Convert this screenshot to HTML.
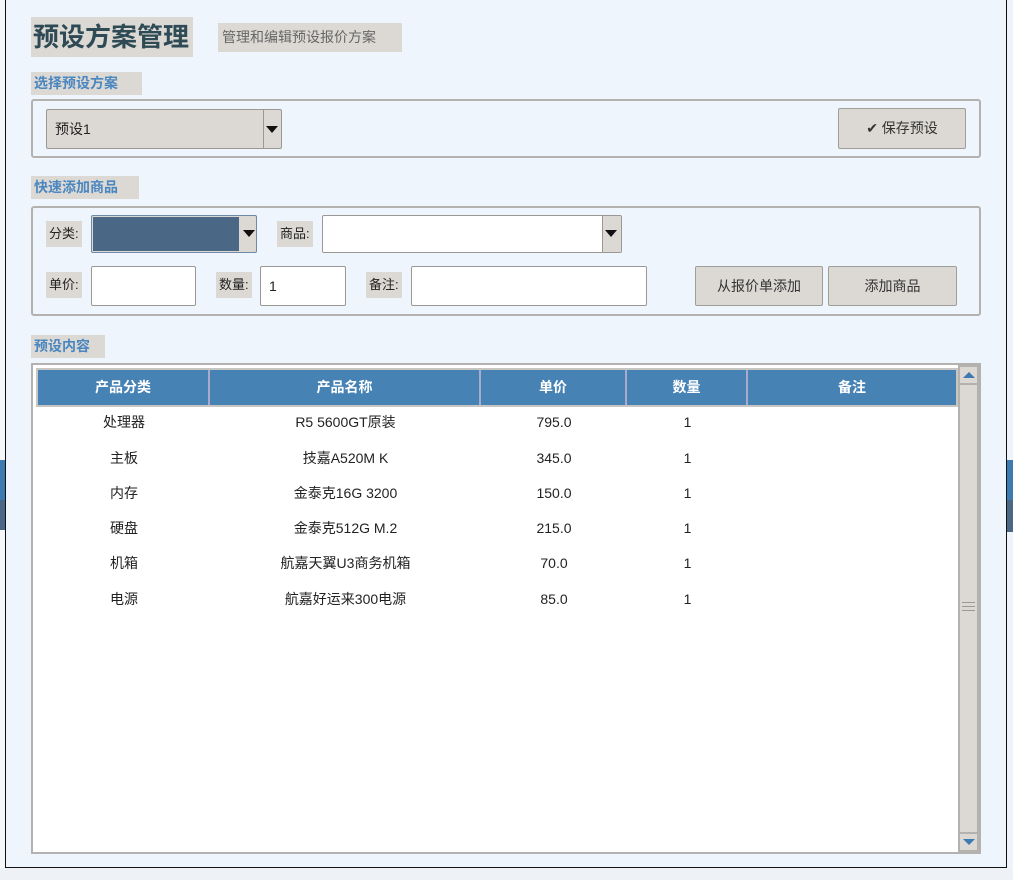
<!DOCTYPE html>
<html><head><meta charset="utf-8"><style>
*{box-sizing:border-box;margin:0;padding:0}
body{width:1013px;height:880px;position:relative;overflow:hidden;background:#eef4fa;font-family:"Liberation Sans","Noto Sans CJK SC",sans-serif;font-size:14px;color:#222}
.a{position:absolute}
.lbl{position:absolute;background:#dcd9d4;color:#4a86c0;font-weight:bold;font-size:14px;line-height:23px;padding:0 3px}
.grp{position:absolute;border:2px solid #b4b2ae;border-radius:3px}
.sm{position:absolute;background:#dcd9d4;font-size:13px;line-height:26px;padding:0 3px;color:#222}
.inp{position:absolute;background:#fff;border:1px solid #9a9893;border-radius:2px;font-size:14px;padding-left:8px}
.btn{position:absolute;background:#dcd9d4;border:1px solid #a09e99;border-radius:2px;text-align:center;font-size:14px;color:#333}
.arr{position:absolute;width:0;height:0;border-left:6px solid transparent;border-right:6px solid transparent;border-top:7px solid #111}
th,td{text-align:center}
.hd{position:absolute;top:370px;height:35px;background:#4682b4;color:#fff;font-weight:bold;line-height:35px;text-align:center;border-right:2px solid #aac}
.row{position:absolute;left:38px;height:35px;line-height:35px;font-size:14px}
.row span{position:absolute;text-align:center}
</style></head><body>
<!-- background windows -->
<div class="a" style="left:0;top:0;width:5px;height:880px;background:#f5f7f9"></div>
<div class="a" style="left:0;top:460px;width:5px;height:40px;background:#3d7ab0"></div>
<div class="a" style="left:0;top:500px;width:5px;height:30px;background:#4a6785"></div>
<div class="a" style="left:1007px;top:460px;width:6px;height:40px;background:#3d7ab0"></div>
<div class="a" style="left:1007px;top:500px;width:6px;height:32px;background:#4a6785"></div>
<div class="a" style="left:0;top:868px;width:1013px;height:12px;background:#eef2f6"></div>
<!-- window -->
<div class="a" style="left:5px;top:-2px;width:1002px;height:870px;border:1.5px solid #111;border-top:none;background:#eef5fc"></div>

<div class="a" style="left:31px;top:17px;width:162px;height:40px;background:#dcd9d4;font-size:26px;font-weight:bold;color:#2e4a55;line-height:40px;padding-left:2px">预设方案管理</div>
<div class="a" style="left:218px;top:23px;width:184px;height:29px;background:#dcd9d4;font-size:14px;color:#666;line-height:29px;padding-left:4px">管理和编辑预设报价方案</div>

<div class="lbl" style="left:31px;top:72px;width:111px">选择预设方案</div>
<div class="grp" style="left:31px;top:99px;width:950px;height:59px"></div>
<div class="a" style="left:46px;top:109px;width:236px;height:40px;background:#dcd9d4;border:1px solid #9a9893;border-radius:2px;font-size:14px;line-height:38px;padding-left:8px">预设1</div>
<div class="a" style="left:263px;top:110px;width:1px;height:38px;background:#9a9893"></div>
<div class="arr" style="left:266px;top:126px"></div>
<div class="btn" style="left:838px;top:108px;width:128px;height:41px;line-height:39px">✔ 保存预设</div>

<div class="lbl" style="left:31px;top:176px;width:108px">快速添加商品</div>
<div class="grp" style="left:31px;top:206px;width:950px;height:110px"></div>
<div class="sm" style="left:46px;top:221px">分类:</div>
<div class="a" style="left:91px;top:215px;width:166px;height:38px;border:1px solid #6e8aa6;border-radius:2px;background:#dcd9d4"></div>
<div class="a" style="left:93px;top:217px;width:146px;height:34px;background:#4a6785"></div>
<div class="arr" style="left:243px;top:230px"></div>
<div class="sm" style="left:277px;top:221px">商品:</div>
<div class="inp" style="left:322px;top:215px;width:300px;height:38px"></div>
<div class="a" style="left:602px;top:216px;width:19px;height:36px;background:#dcd9d4;border-left:1px solid #9a9893"></div>
<div class="arr" style="left:605px;top:230px"></div>

<div class="sm" style="left:46px;top:272px">单价:</div>
<div class="inp" style="left:91px;top:266px;width:105px;height:40px"></div>
<div class="sm" style="left:216px;top:272px">数量:</div>
<div class="inp" style="left:260px;top:266px;width:86px;height:40px;line-height:38px">1</div>
<div class="sm" style="left:366px;top:272px">备注:</div>
<div class="inp" style="left:411px;top:266px;width:236px;height:40px"></div>
<div class="btn" style="left:695px;top:266px;width:128px;height:40px;line-height:38px">从报价单添加</div>
<div class="btn" style="left:828px;top:266px;width:129px;height:40px;line-height:38px">添加商品</div>

<div class="lbl" style="left:31px;top:335px;width:74px">预设内容</div>
<div class="a" style="left:31px;top:363px;width:950px;height:491px;border:2px solid #b4b2ae;background:#fff"></div>
<div class="a" style="left:36px;top:368px;width:922px;height:39px;background:#c8c6c2"></div>
<div class="hd" style="left:38px;width:172px">产品分类</div>
<div class="hd" style="left:210px;width:271px">产品名称</div>
<div class="hd" style="left:481px;width:146px">单价</div>
<div class="hd" style="left:627px;width:121px">数量</div>
<div class="hd" style="left:748px;width:208px;border-right:none">备注</div>

<div class="row" style="top:405px"><span style="left:0;width:172px">处理器</span><span style="left:172px;width:271px">R5 5600GT原装</span><span style="left:443px;width:146px">795.0</span><span style="left:589px;width:121px">1</span></div>
<div class="row" style="top:441px"><span style="left:0;width:172px">主板</span><span style="left:172px;width:271px">技嘉A520M K</span><span style="left:443px;width:146px">345.0</span><span style="left:589px;width:121px">1</span></div>
<div class="row" style="top:476px"><span style="left:0;width:172px">内存</span><span style="left:172px;width:271px">金泰克16G 3200</span><span style="left:443px;width:146px">150.0</span><span style="left:589px;width:121px">1</span></div>
<div class="row" style="top:511px"><span style="left:0;width:172px">硬盘</span><span style="left:172px;width:271px">金泰克512G M.2</span><span style="left:443px;width:146px">215.0</span><span style="left:589px;width:121px">1</span></div>
<div class="row" style="top:546px"><span style="left:0;width:172px">机箱</span><span style="left:172px;width:271px">航嘉天翼U3商务机箱</span><span style="left:443px;width:146px">70.0</span><span style="left:589px;width:121px">1</span></div>
<div class="row" style="top:582px"><span style="left:0;width:172px">电源</span><span style="left:172px;width:271px">航嘉好运来300电源</span><span style="left:443px;width:146px">85.0</span><span style="left:589px;width:121px">1</span></div>

<!-- scrollbar -->
<div class="a" style="left:958px;top:365px;width:21px;height:487px;background:#dcd9d4;border:2px solid #b4b2ae"></div>
<div class="a" style="left:960px;top:367px;width:17px;height:18px;border-bottom:2px solid #b4b2ae"></div>
<div class="a" style="left:963px;top:372px;width:0;height:0;border-left:6px solid transparent;border-right:6px solid transparent;border-bottom:6px solid #3d7ab0"></div>
<div class="a" style="left:960px;top:832px;width:17px;height:18px;border-top:2px solid #b4b2ae"></div>
<div class="a" style="left:963px;top:839px;width:0;height:0;border-left:6px solid transparent;border-right:6px solid transparent;border-top:6px solid #3d7ab0"></div>
<div class="a" style="left:962px;top:602px;width:13px;height:9px;border-top:1px solid #999;border-bottom:1px solid #999"></div>
<div class="a" style="left:962px;top:606px;width:13px;height:1px;background:#999"></div>
</body></html>
